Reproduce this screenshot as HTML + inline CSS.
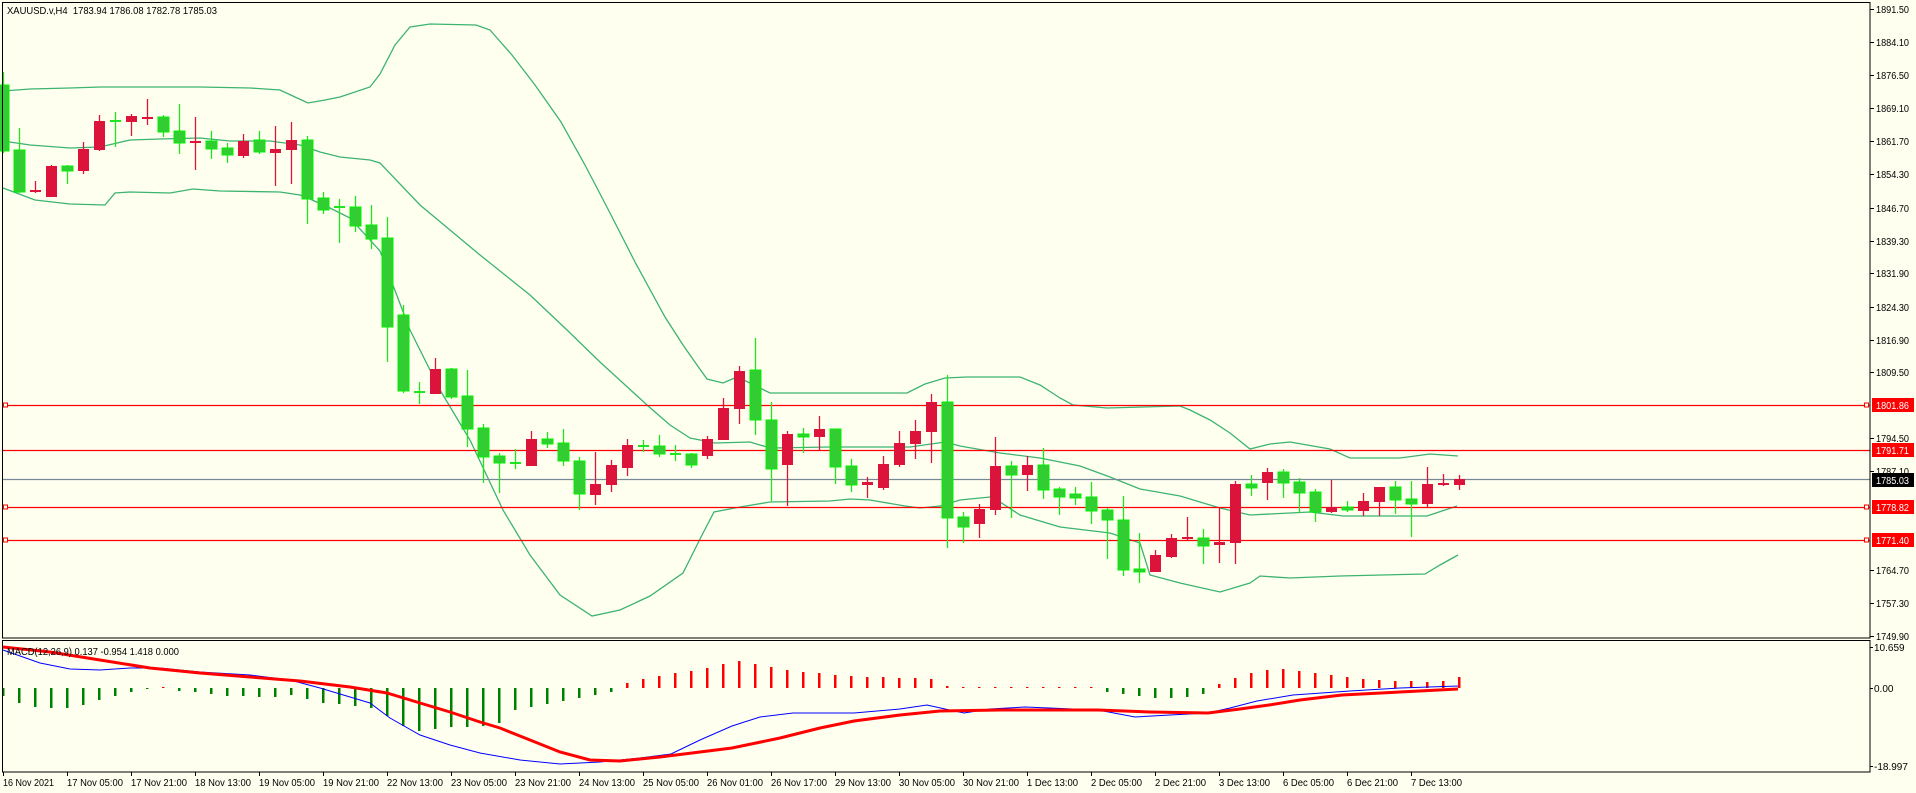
<!DOCTYPE html>
<html><head><meta charset="utf-8"><style>
html,body{margin:0;padding:0;background:#FFFFF0;width:1916px;height:793px;overflow:hidden}
svg{display:block}
text{font-family:"Liberation Sans",sans-serif;font-size:10px;fill:#000}
</style></head><body>
<svg id="s" width="1916" height="793" xmlns="http://www.w3.org/2000/svg">
<rect width="1916" height="793" fill="#FFFFF0"/>
<g id="bands" fill="none" stroke="#3CB371" stroke-width="1.3"></g>
<g id="hl"></g>
<g id="candles"></g>
<g id="macd"></g>
<rect x="2.5" y="2.5" width="1867.5" height="635.5" fill="none" stroke="#000"/>
<rect x="2.5" y="640.5" width="1867.5" height="131.5" fill="none" stroke="#000"/>
<text x="7" y="14" textLength="210" lengthAdjust="spacingAndGlyphs">XAUUSD.v,H4&#160; 1783.94 1786.08 1782.78 1785.03</text>
<text x="7" y="655" textLength="172" lengthAdjust="spacingAndGlyphs">MACD(12,26,9) 0.137 -0.954 1.418 0.000</text>
<g id="ptx">
<text x="1876" y="13">1891.50</text>
<text x="1876" y="46">1884.10</text>
<text x="1876" y="79">1876.50</text>
<text x="1876" y="112">1869.10</text>
<text x="1876" y="145">1861.70</text>
<text x="1876" y="178">1854.30</text>
<text x="1876" y="212">1846.70</text>
<text x="1876" y="245">1839.30</text>
<text x="1876" y="277">1831.90</text>
<text x="1876" y="311">1824.30</text>
<text x="1876" y="344">1816.90</text>
<text x="1876" y="376">1809.50</text>
<text x="1876" y="442">1794.50</text>
<text x="1876" y="475">1787.10</text>
<text x="1876" y="574">1764.70</text>
<text x="1876" y="607">1757.30</text>
<text x="1876" y="640">1749.90</text>
<text x="1874" y="651">10.659</text>
<text x="1874" y="692">0.00</text>
<text x="1874" y="770">-18.997</text>
</g>
<g id="tags">
<rect x="1872" y="398" width="42" height="14" fill="#FF0000"/><text x="1876" y="409" style="fill:#fff">1801.86</text>
<rect x="1872" y="443" width="42" height="14" fill="#FF0000"/><text x="1876" y="454" style="fill:#fff">1791.71</text>
<rect x="1872" y="473" width="42" height="14" fill="#000"/><text x="1876" y="484" style="fill:#fff">1785.03</text>
<rect x="1872" y="500" width="42" height="14" fill="#FF0000"/><text x="1876" y="511" style="fill:#fff">1778.82</text>
<rect x="1872" y="533" width="42" height="14" fill="#FF0000"/><text x="1876" y="544" style="fill:#fff">1771.40</text>
</g>
<g id="tx">
<text x="3" y="786">16 Nov 2021</text>
<text x="67" y="786">17 Nov 05:00</text>
<text x="131" y="786">17 Nov 21:00</text>
<text x="195" y="786">18 Nov 13:00</text>
<text x="259" y="786">19 Nov 05:00</text>
<text x="323" y="786">19 Nov 21:00</text>
<text x="387" y="786">22 Nov 13:00</text>
<text x="451" y="786">23 Nov 05:00</text>
<text x="515" y="786">23 Nov 21:00</text>
<text x="579" y="786">24 Nov 13:00</text>
<text x="643" y="786">25 Nov 05:00</text>
<text x="707" y="786">26 Nov 01:00</text>
<text x="771" y="786">26 Nov 17:00</text>
<text x="835" y="786">29 Nov 13:00</text>
<text x="899" y="786">30 Nov 05:00</text>
<text x="963" y="786">30 Nov 21:00</text>
<text x="1027" y="786">1 Dec 13:00</text>
<text x="1091" y="786">2 Dec 05:00</text>
<text x="1155" y="786">2 Dec 21:00</text>
<text x="1219" y="786">3 Dec 13:00</text>
<text x="1283" y="786">6 Dec 05:00</text>
<text x="1347" y="786">6 Dec 21:00</text>
<text x="1411" y="786">7 Dec 13:00</text>
</g>
<g id="ticks" stroke="#000"></g>
</svg>
<script>
var NS="http://www.w3.org/2000/svg";
function el(p,t,a){var e=document.createElementNS(NS,t);for(var k in a)e.setAttribute(k,a[k]);document.getElementById(p).appendChild(e);return e;}
function pl(p,pts,st,w){el(p,'polyline',{points:pts.map(function(q){return q.join(',')}).join(' '),fill:'none',stroke:st,'stroke-width':w});}
// fix text widths
Array.prototype.forEach.call(document.querySelectorAll('#ptx text,#tags text'),function(t){if(t.textContent.length==7&&t.textContent[0]!='-'){t.setAttribute('textLength','33');t.setAttribute('lengthAdjust','spacingAndGlyphs');}});
Array.prototype.forEach.call(document.querySelectorAll('#tx text'),function(t){var n=t.textContent.length;t.setAttribute('textLength',n>=12?'56':'51');t.setAttribute('lengthAdjust','spacingAndGlyphs');});
pl('bands',[[3,91],[30,89],[70,88],[100,87],[150,87],[200,87],[250,88],[280,90],[295,97],[308,103],[325,100],[340,97],[370,87],[380,74],[395,45],[410,27],[430,24],[476,25],[490,30],[512,55],[535,85],[561,122],[585,165],[610,213],[635,262],[665,317],[683,345],[697,365],[707,379],[723,383],[737,377],[750,383],[770,393],[800,393],[907,393],[925,384],[945,378],[967,377],[1020,377],[1040,385],[1060,398],[1073,405],[1107,408],[1180,406],[1190,410],[1210,420],[1230,433],[1250,449],[1270,444],[1290,442],[1330,449],[1350,458],[1400,458],[1430,454],[1458,456]],'#3CB371',1.3);
pl('bands',[[3,141],[30,145],[70,148],[100,147],[130,140],[160,139],[200,138],[230,141],[270,141],[300,145],[320,152],[340,157],[370,160],[380,163],[420,205],[450,230],[480,255],[530,295],[567,330],[600,362],[647,405],[670,425],[690,438],[715,443],[750,442],[770,448],[830,447],[910,447],[945,442],[960,446],[1000,453],[1040,458],[1080,466],[1110,477],[1140,489],[1180,496],[1220,508],[1250,515],[1310,512],[1343,516],[1427,516],[1457,506]],'#3CB371',1.3);
pl('bands',[[3,188],[35,200],[70,204],[105,205],[115,193],[130,192],[170,193],[193,189],[220,191],[280,192],[300,195],[310,199],[330,208],[350,218],[380,251],[410,330],[440,390],[470,440],[503,510],[530,555],[560,595],[592,616],[620,610],[650,596],[683,573],[701,537],[714,512],[740,507],[770,502],[830,501],[850,499],[870,500],[905,506],[920,508],[940,506],[960,500],[990,497],[1000,502],[1020,515],[1060,527],[1110,533],[1140,543],[1150,575],[1180,583],[1220,592],[1250,583],[1260,576],[1290,578],[1340,576],[1425,574],[1440,565],[1458,555]],'#3CB371',1.3);
[[405,'#FF0000'],[450,'#FF0000'],[479,'#778899'],[507,'#FF0000'],[540,'#FF0000']].forEach(function(l){el('hl','line',{x1:3,x2:1870,y1:l[0]+.5,y2:l[0]+.5,stroke:l[1],'stroke-width':1.2});});
[405,507,540].forEach(function(y){el('hl','rect',{x:3.5,y:y-2,width:4,height:4,fill:'#FFFFF0',stroke:'#FF0000'});el('hl','rect',{x:1864.5,y:y-2,width:4,height:4,fill:'#FFFFF0',stroke:'#FF0000'});});
var C=[['g',72,85,151,153],['g',128,150,192,193],['r',181,190,192,193],['r',165,166,197,197],['g',165,166,171,184],['r',142,149,171,174],['r',115,121,150,151],['g',112,121,121,147],['r',114,116,122,136],['r',99,117,119,125],['g',115,117,132,137],['g',104,131,143,154],['r',117,141,143,170],['g',131,141,149,159],['g',143,148,155,163],['r',134,141,156,158],['g',131,140,152,154],['r',126,149,153,186],['r',122,140,150,184],['g',136,140,199,224],['g',192,198,210,214],['g',199,207,207,243],['g',196,207,226,232],['g',205,225,239,249],
['g',217,238,327,362],['g',305,315,391,393],['g',382,392,392,404],['r',358,369,394,394],['g',368,369,397,399],['g',370,396,429,447],['g',424,428,457,483],['g',453,456,463,493],['g',449,463,463,469],['r',431,439,466,466],['g',432,439,444,448],['g',429,443,461,466],['g',457,461,494,510],['r',452,484,495,505],['r',460,465,485,492],['r',439,445,468,476],['g',440,446,446,452],['g',435,446,454,457],['g',445,454,454,461],['g',453,454,465,468],['r',436,439,456,459],['r',398,408,440,440],['r',366,371,409,424],
['g',338,370,420,435],['g',402,420,469,501],['r',431,434,465,506],['g',428,434,437,453],['r',416,429,437,450],['g',429,429,467,484],['g',459,466,485,492],['r',477,482,485,498],['r',456,464,488,490],['r',431,443,465,467],['r',420,431,444,459],['r',394,402,432,463],['g',375,402,518,548],['g',512,517,527,543],['r',504,509,524,538],['r',437,466,510,515],['g',461,466,475,518],['r',456,465,475,491],['g',448,465,490,499],['g',487,489,497,515],['g',487,494,498,505],['g',482,497,511,524],['g',508,510,520,559],
['g',496,520,570,576],['g',533,569,572,583],['r',550,555,572,572],['r',534,538,557,558],['r',517,538,538,540],['g',529,538,546,564],['r',508,542,545,563],['r',481,484,543,564],['g',475,484,488,496],['r',468,472,483,500],['g',469,472,483,498],['g',478,482,493,513],['g',489,492,512,522],['r',480,507,512,513],['g',501,507,510,512],['r',493,501,511,516],['r',487,487,502,516],['g',481,487,500,514],['g',481,499,504,537],['r',467,484,504,507],['r',474,484,484,486],['r',475,479,485,490]];
C.forEach(function(c,k){var x=3+16*k;var red=c[0]=='r';var wc=red?'#DC143C':'#1EE61E';
el('candles','line',{x1:x+.5,x2:x+.5,y1:c[1],y2:c[4],stroke:wc,'stroke-width':1.3});
var h=c[3]-c[2];
if(h<2){el('candles','rect',{x:x-5,y:c[2]-1,width:11,height:2,fill:wc});}
else el('candles','rect',{x:x-5,y:c[2],width:11,height:h,fill:red?'#DC143C':'#32CD32',stroke:red?'#DC143C':'#00F000','stroke-width':red?0:1});
});
var H=[-8,-15,-19,-20,-20,-17,-12,-8,-4,-1,1,-3,-4,-6,-8,-8,-9,-9,-7,-11,-15,-16,-18,-20,-28,-38,-43,-41,-39,-39,-38,-35,-22,-19,-16,-13,-10,-7,-4,5,9,12,15,17,20,24,27,24,21,18,16,15,13,12,11,11,10,10,9,2,1,1,1,1,1,1,1,1,1,-4,-6,-8,-10,-10,-9,-6,4,10,15,18,19,17,15,13,11,9,8,7,7,6,7,11];
H.forEach(function(v,k){var x=3+16*k;if(!v)return;el('macd','rect',{x:x-1,y:v>0?688-v:688,width:2.5,height:Math.abs(v),fill:v>0?'#FF0000':'#008000'});});
pl('macd',[[3,650],[40,663],[70,669],[100,670],[130,668],[160,668],[200,672],[250,675],[290,680],[320,688],[370,703],[390,718],[420,735],[450,745],[480,753],[520,760],[560,764],[600,762],[640,758],[671,754],[700,740],[732,726],[760,717],[793,713],[854,713],[900,709],[927,705],[945,709],[964,713],[990,709],[1025,707],[1098,710],[1135,717],[1170,715],[1208,713],[1230,708],[1257,701],[1293,695],[1350,691],[1400,688],[1458,686]],'#0000FF',1);
pl('macd',[[3,647],[50,652],[100,660],[150,668],[200,673],[250,677],[300,681],[350,687],[387,693],[420,703],[450,712],[480,722],[500,728],[530,740],[560,752],[590,760],[620,761],[660,757],[700,752],[732,748],[780,738],[820,728],[854,721],[900,715],[940,711],[1000,710],[1098,710],[1150,712],[1208,713],[1240,709],[1269,705],[1300,700],[1342,695],[1400,692],[1458,689]],'#FF0000',3);
var ty=[9,42,75,108,141,174,208,241,273,307,340,372,438,471,570,603,636];
ty.forEach(function(y){el('ticks','line',{x1:1870,x2:1874,y1:y+.5,y2:y+.5});});
[647,688,766].forEach(function(y){el('ticks','line',{x1:1870,x2:1873,y1:y+.5,y2:y+.5});});
for(var i=0;i<23;i++){var x=3+64*i+.5;el('ticks','line',{x1:x,x2:x,y1:772,y2:776});}
</script>
</body></html>
